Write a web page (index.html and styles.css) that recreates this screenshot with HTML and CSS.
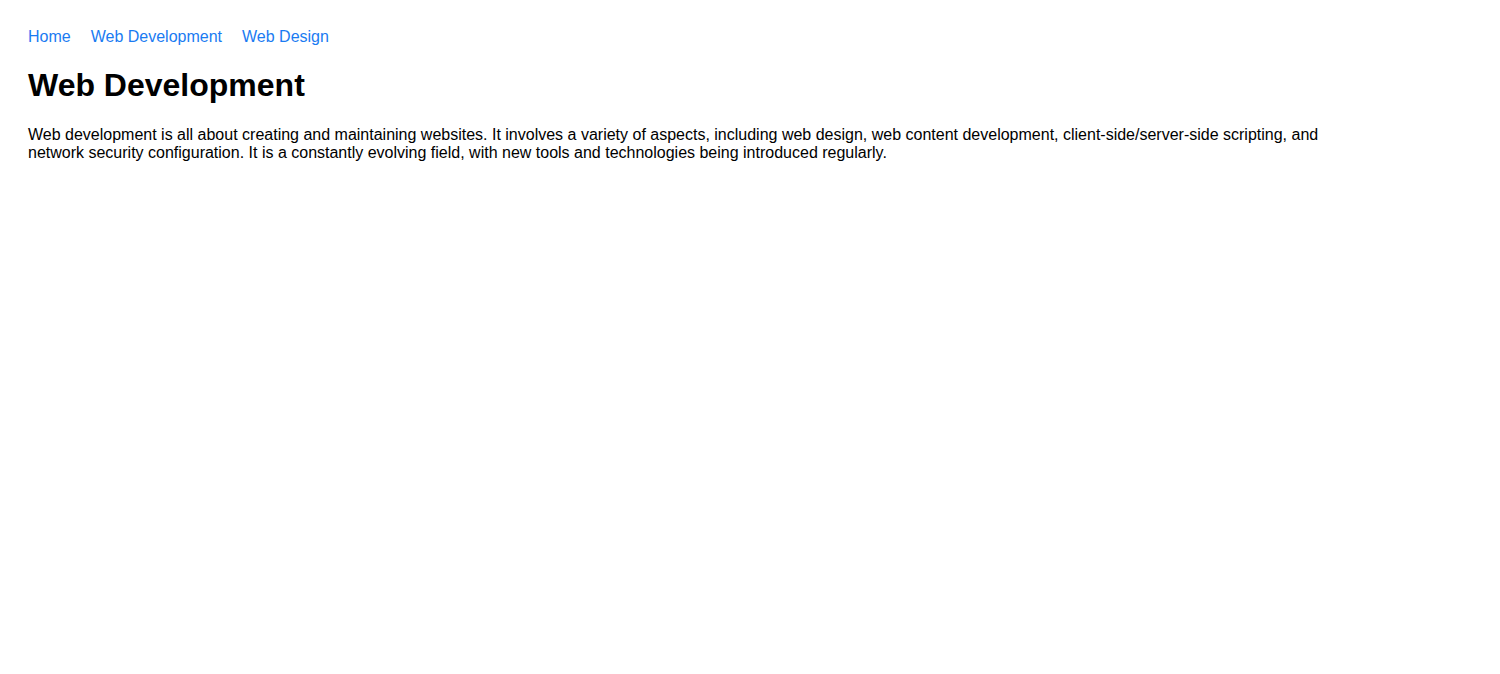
FILE: index.html
```html
<!DOCTYPE html>
<html lang="en">
<head>
<meta charset="utf-8">
<title>Web Development</title>
<link rel="stylesheet" href="styles.css">
</head>
<body>
<div class="page">
  <nav class="crumbs">
    <a href="#">Home</a>
    <a href="#">Web Development</a>
    <a href="#">Web Design</a>
  </nav>
  <h1 class="title">Web Development</h1>
  <p class="text">Web development is all about creating and maintaining websites. It involves a variety of aspects, including web design, web content development, client-side/server-side scripting, and network security configuration. It is a constantly evolving field, with new tools and technologies being introduced regularly.</p>
</div>
</body>
</html>
```
FILE: styles.css
```css
body {
  margin: 8px;
  font-family: "Liberation Sans", Arial, sans-serif;
  color: #000;
  background: #fff;
}
.page {
  padding: 20px;
  max-width: 1300px;
}
.crumbs {
  display: flex;
  gap: 20px;
  font-size: 16px;
}
.crumbs a {
  color: #1a7bf2;
  text-decoration: none;
}
.title {
  font-size: 32px;
  font-weight: bold;
  margin: 21.44px 0;
}
.text {
  font-size: 16px;
  margin: 16px 0;
}
```
